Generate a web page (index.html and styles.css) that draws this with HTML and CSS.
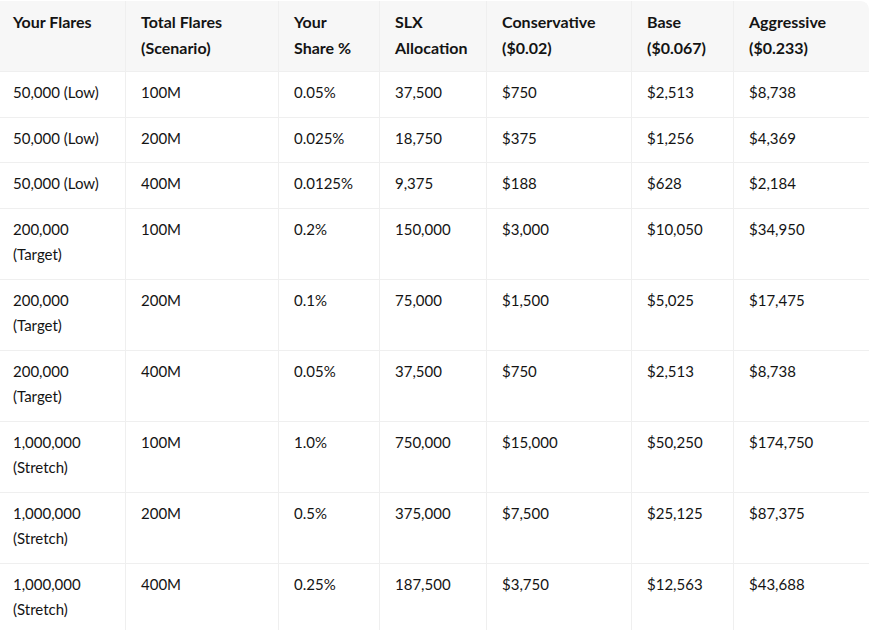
FILE: index.html
```html
<!DOCTYPE html>
<html>
<head>
<meta charset="utf-8">
<link rel="stylesheet" href="styles.css">
</head>
<body>
<div class="wrap">
<table class="grid">
<colgroup>
<col class="c1"><col class="c2"><col class="c3"><col class="c4"><col class="c5"><col class="c6"><col class="c7">
</colgroup>
<thead>
<tr><th>Your Flares</th><th>Total Flares (Scenario)</th><th>Your Share %</th><th>SLX Allocation</th><th>Conservative ($0.02)</th><th>Base ($0.067)</th><th>Aggressive ($0.233)</th></tr>
</thead>
<tbody>
<tr><td>50,000 (Low)</td><td>100M</td><td>0.05%</td><td>37,500</td><td>$750</td><td>$2,513</td><td>$8,738</td></tr>
<tr><td>50,000 (Low)</td><td>200M</td><td>0.025%</td><td>18,750</td><td>$375</td><td>$1,256</td><td>$4,369</td></tr>
<tr><td>50,000 (Low)</td><td>400M</td><td>0.0125%</td><td>9,375</td><td>$188</td><td>$628</td><td>$2,184</td></tr>
<tr><td>200,000 (Target)</td><td>100M</td><td>0.2%</td><td>150,000</td><td>$3,000</td><td>$10,050</td><td>$34,950</td></tr>
<tr><td>200,000 (Target)</td><td>200M</td><td>0.1%</td><td>75,000</td><td>$1,500</td><td>$5,025</td><td>$17,475</td></tr>
<tr><td>200,000 (Target)</td><td>400M</td><td>0.05%</td><td>37,500</td><td>$750</td><td>$2,513</td><td>$8,738</td></tr>
<tr><td>1,000,000 (Stretch)</td><td>100M</td><td>1.0%</td><td>750,000</td><td>$15,000</td><td>$50,250</td><td>$174,750</td></tr>
<tr><td>1,000,000 (Stretch)</td><td>200M</td><td>0.5%</td><td>375,000</td><td>$7,500</td><td>$25,125</td><td>$87,375</td></tr>
<tr><td>1,000,000 (Stretch)</td><td>400M</td><td>0.25%</td><td>187,500</td><td>$3,750</td><td>$12,563</td><td>$43,688</td></tr>
</tbody>
</table>
</div>
</body>
</html>
```
FILE: styles.css
```css
html, body {
  margin: 0;
  padding: 0;
  background: #ffffff;
}
.wrap {
  padding-top: 1px;
  overflow: hidden;
}
.grid {
  width: 869px;
  table-layout: fixed;
  border-collapse: separate;
  border-spacing: 0;
  font-family: Lato, "Noto Sans", sans-serif;
  font-size: 15px;
  line-height: 25.5px;
  color: #141414;
  border-top-right-radius: 8px;
  overflow: hidden;
}
.c1 { width: 125px; }
.c2 { width: 153px; }
.c3 { width: 101px; }
.c4 { width: 107px; }
.c5 { width: 145px; }
.c6 { width: 102px; }
.c7 { width: 136px; }
.grid th,
.grid td {
  text-align: left;
  vertical-align: top;
  padding: 8px 15px 11px;
  border-left: 1px solid #efefef;
  border-bottom: 1px solid #efefef;
}
.grid th {
  background: #f7f7f7;
  font-weight: 700;
  font-size: 16px;
  line-height: 26px;
  padding-top: 8px;
  padding-bottom: 10px;
}
.grid th:first-child,
.grid td:first-child {
  border-left: none;
  padding-left: 13px;
}
.grid th:last-child {
  border-top-right-radius: 8px;
}
```
